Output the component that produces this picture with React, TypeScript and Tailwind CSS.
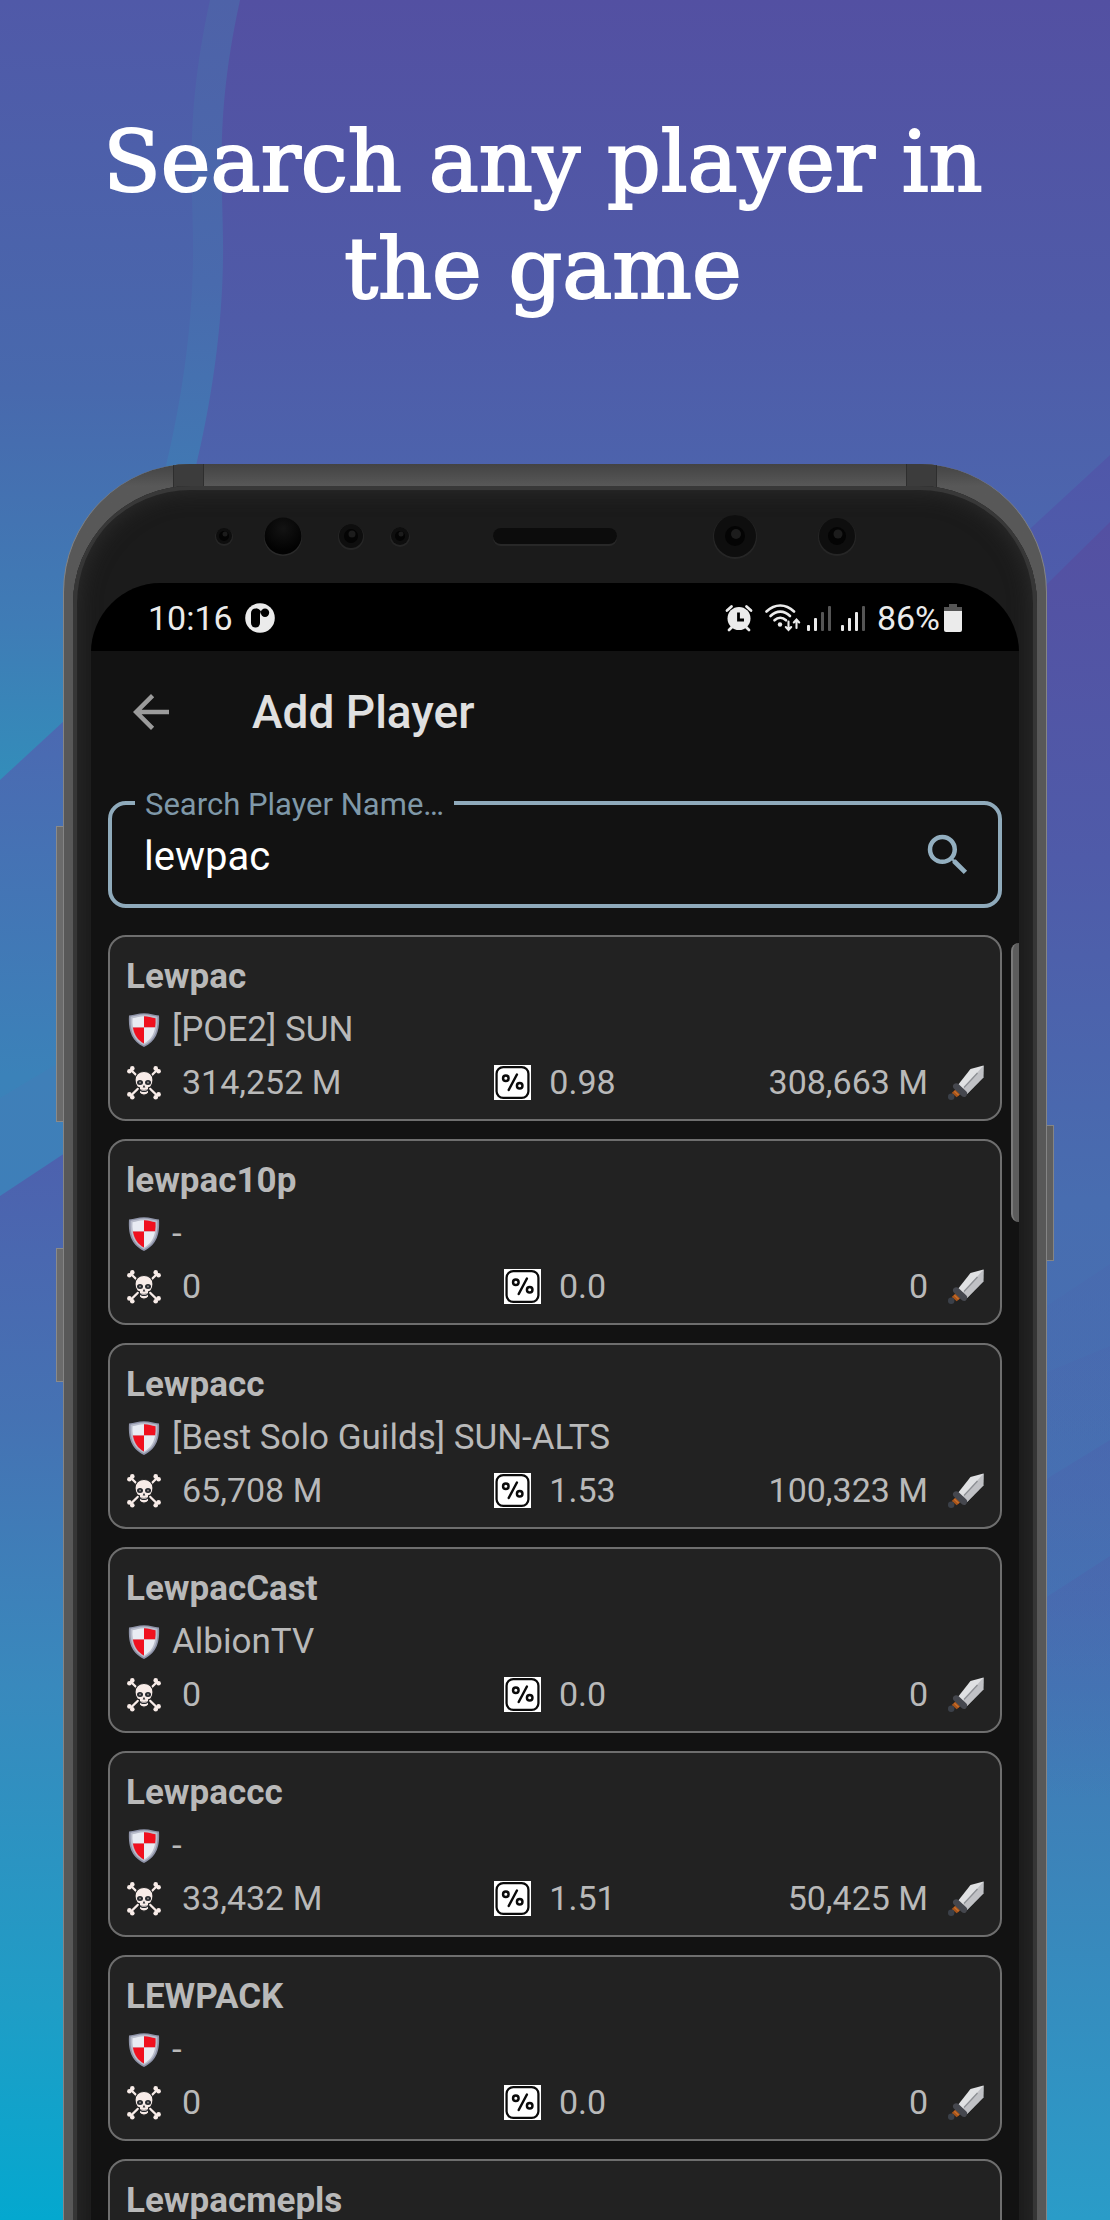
import { useState } from "react";
import { MdArrowBack, MdSearch } from "react-icons/md";

interface Player {
  name: string;
  guild: string;
  deathFame: string;
  ratio: string;
  killFame: string;
}

const PLAYERS: Player[] = [
  { name: "Lewpac", guild: "[POE2] SUN", deathFame: "314,252 M", ratio: "0.98", killFame: "308,663 M" },
  { name: "lewpac10p", guild: "-", deathFame: "0", ratio: "0.0", killFame: "0" },
  { name: "Lewpacc", guild: "[Best Solo Guilds] SUN-ALTS", deathFame: "65,708 M", ratio: "1.53", killFame: "100,323 M" },
  { name: "LewpacCast", guild: "AlbionTV", deathFame: "0", ratio: "0.0", killFame: "0" },
  { name: "Lewpaccc", guild: "-", deathFame: "33,432 M", ratio: "1.51", killFame: "50,425 M" },
  { name: "LEWPACK", guild: "-", deathFame: "0", ratio: "0.0", killFame: "0" },
  { name: "Lewpacmepls", guild: "-", deathFame: "0", ratio: "0.0", killFame: "0" },
];

function ShieldIcon() {
  return (
    <svg viewBox="0 0 36 36" className="size-9 shrink-0" aria-hidden="true">
      <path d="M3 3.5C8 2.8 12 1.4 18 1.2c6 .2 10 1.600 15 2.300.8 13.500-1.500 25-15 31.500C4.500 28.500 2.200 17 3 3.500Z" fill="#8e93a8" />
      <path d="M4.600 4.800C9.500 4 13 2.800 18 2.600c5 .2 8.500 1.400 13.400 2.200.6 12-1.600 22.600-13.400 28.500C6.200 27.400 4 16.800 4.600 4.800Z" fill="#b9bdcb" />
      <path d="M18 4.300c-4.500.2-7.500 1.300-11.500 1.900-.2 3-.1 6 .4 9.300H18Z" fill="#e9ecf3" />
      <path d="M18 4.300c4.500.2 7.500 1.300 11.500 1.900.2 3 .1 6-.4 9.300H18Z" fill="#f0101f" />
      <path d="M6.900 15.500C8.400 23 11.500 28 18 31.600V15.500Z" fill="#f0101f" />
      <path d="M29.100 15.500C27.600 23 24.500 28 18 31.600V15.500Z" fill="#e9ecf3" />
    </svg>
  );
}

function SkullIcon() {
  return (
    <svg viewBox="0 0 36 36" className="size-9 shrink-0" aria-hidden="true">
      <path d="M5 5l26 25.500M31 5 5 30.500" stroke="#f8ece8" strokeWidth="2.400" strokeLinecap="round" />
      <g fill="#f8ece8">
        <circle cx="6.300" cy="3.400" r="2.300" />
        <circle cx="3.400" cy="6.300" r="2.300" />
        <circle cx="29.700" cy="3.400" r="2.300" />
        <circle cx="32.600" cy="6.300" r="2.300" />
        <circle cx="6.300" cy="32.200" r="2.300" />
        <circle cx="3.400" cy="29.400" r="2.300" />
        <circle cx="29.700" cy="32.200" r="2.300" />
        <circle cx="32.600" cy="29.400" r="2.300" />
      </g>
      <path
        d="M18 6.500c-5.500 0-9 3.500-9 8.500 0 2.500.6 4 1.400 5.300.3 1.400 1.500 2.100 3 2.500v5c1.200 1.700 2.700 2.400 4.600 2.400s3.400-.7 4.600-2.400v-5c1.500-.4 2.700-1.100 3-2.500.8-1.300 1.400-2.800 1.400-5.300 0-5-3.500-8.500-9-8.500Z"
        fill="#f8ece8"
        stroke="#222"
        strokeWidth="1.200"
      />
      <ellipse cx="14" cy="17.500" rx="3" ry="2.500" fill="#26292e" />
      <ellipse cx="22" cy="17.500" rx="3" ry="2.500" fill="#26292e" />
      <circle cx="14" cy="17.500" r="1" fill="#8a8583" />
      <circle cx="22" cy="17.500" r="1" fill="#8a8583" />
      <path d="m18 19.800-1.300 2.600h2.600Z" fill="#26292e" />
      <path d="M13.500 23.500c.8 1.200 2.300 1.400 4.500 1.400s3.700-.2 4.500-1.400c0 2-.9 3.600-4.500 3.600s-4.500-1.600-4.500-3.600Z" fill="#26292e" />
      <path d="M15.500 24.700h5v1h-5z" fill="#d8cdca" />
    </svg>
  );
}

function RatioIcon() {
  return (
    <svg viewBox="0 0 36 34" className="h-[35px] w-[37px] shrink-0" aria-hidden="true">
      <path d="M0 0h36v34H0z" fill="#fff" />
      <rect x="2.500" y="2" width="31" height="30" rx="6.500" fill="#fff" stroke="#0a0a0a" strokeWidth="2.200" />
      <g fill="none" stroke="#0a0a0a" strokeWidth="2.400" strokeLinecap="round">
        <circle cx="11.500" cy="12.800" r="2.700" />
        <circle cx="25" cy="20.200" r="2.700" />
        <path d="M22.300 9.200 14.300 24.300" />
      </g>
    </svg>
  );
}

function SwordIcon() {
  return (
    <svg viewBox="0 0 36 36" className="size-9 shrink-0" aria-hidden="true">
      <path d="m9.500 20.500 13-16.500L35.500 .5 35.300 12.500 19 29Z" fill="#e0e1e3" />
      <path d="M35.500 .5 14.200 24.500 19 29 35.300 12.500Z" fill="#c0c1c5" />
      <path d="M29.500 8 16 22.500" stroke="#8d8f94" strokeWidth="1.300" />
      <path d="m3.700 28 5.300-5 5 4.800-5.300 4.500Z" fill="#a6531a" />
      <path d="m6.300 26.300 4.300 4" stroke="#c9702c" strokeWidth="1.200" />
      <path d="M5.500 19.500c1.500-1.500 3.700-1.700 5.200-.3l7.700 7.300c1.500 1.500.9 3.700-.6 4.900-1.300 1-3 .7-4.100-.5L5.800 23.500c-1.100-1-1.300-2.800-.3-4Z" fill="#45474e" />
      <circle cx="3.200" cy="31.800" r="3.200" fill="#3b4049" />
    </svg>
  );
}

function AlarmIcon() {
  return (
    <svg viewBox="0 0 28 28" className="size-7 shrink-0" aria-hidden="true">
      <path d="m2 6.500 4.500-4M26 6.500l-4.500-4" stroke="#ebebeb" strokeWidth="2.800" strokeLinecap="round" />
      <path d="m7 23-3 3M21 23l3 3" stroke="#ebebeb" strokeWidth="2.800" strokeLinecap="round" />
      <circle cx="14" cy="14.500" r="11.500" fill="#ebebeb" />
      <path d="M13.500 8.500v7.500H19" fill="none" stroke="#000" strokeWidth="2.800" />
    </svg>
  );
}

function WifiIcon() {
  return (
    <svg viewBox="0 0 36 28" className="h-7 w-9 shrink-0" aria-hidden="true">
      <g fill="none" stroke="#ebebeb" strokeWidth="2.600" strokeLinecap="round">
        <path d="M1.500 7.500c8.500-8 19-8 27.500 0" />
        <path d="M5.500 12c6-5.800 13.500-5.800 19.500 0" />
        <path d="M9.500 16.300c3.500-3.300 8-3.300 11.500 0" />
        <path d="M23.500 17.500v8M20.800 23l2.700 3 2.700-3M31.500 24v-8M28.800 18.500l2.700-3 2.700 3" strokeWidth="2.100" />
      </g>
      <circle cx="15" cy="20.500" r="2.200" fill="#ebebeb" />
    </svg>
  );
}

function SignalIcon({ level }: { level: number }) {
  const bars = [
    { x: 0, y: 20, h: 6 },
    { x: 7, y: 13, h: 13 },
    { x: 14, y: 7, h: 19 },
    { x: 21, y: 1, h: 25 },
  ];

  return (
    <svg viewBox="0 0 24 26" className="h-[26px] w-6 shrink-0" aria-hidden="true">
      {bars.map((bar, i) => (
        <rect key={bar.x} x={bar.x} y={bar.y} width="3" height={bar.h} rx="1" fill={i < level ? "#ebebeb" : "#555"} />
      ))}
    </svg>
  );
}

function StatusBar() {
  return (
    <div className="flex h-[68px] shrink-0 items-center justify-between bg-black px-[57px] pt-0.5 text-[34px] text-[#ebebeb]">
      <div className="flex items-center gap-3">
        <span>10:16</span>
        <svg viewBox="0 0 30 30" className="size-[30px]" aria-hidden="true">
          <circle cx="15" cy="15" r="14.800" fill="#ebebeb" />
          <rect x="6" y="5.500" width="9" height="19" rx="4.500" fill="#000" />
          <path d="M11 5.500c3 0 4 1.500 5 3l-1 3h-3Z" fill="#000" />
          <circle cx="20" cy="9.700" r="4.200" fill="#000" />
        </svg>
      </div>
      <div className="flex items-center">
        <AlarmIcon />
        <span className="ml-3">
          <WifiIcon />
        </span>
        <span className="ml-1.5 flex gap-2.5">
          <SignalIcon level={2} />
          <SignalIcon level={3} />
        </span>
        <span className="ml-3">86%</span>
        <svg viewBox="0 0 18 28" className="ml-1 h-7 w-[18px]" aria-hidden="true">
          <path d="M5 0h8v3h5v5H0V3h5Z" fill="#555" />
          <path d="M0 7h18v19a2 2 0 0 1-2 2H2a2 2 0 0 1-2-2Z" fill="#ebebeb" />
        </svg>
      </div>
    </div>
  );
}

function PlayerCard({ player }: { player: Player }) {
  return (
    <li className="rounded-[18px] border-2 border-[#6e6e6e] bg-[#222222] px-4 pt-[13px] pb-2.5 text-[34px] leading-[53px] text-[#b9b9b9]">
      <h2 className="text-[35px] font-bold">{player.name}</h2>
      <div className="flex items-center gap-2.5 text-[35px]">
        <ShieldIcon />
        <span>{player.guild}</span>
      </div>
      <div className="grid grid-cols-3">
        <div className="flex items-center gap-5">
          <SkullIcon />
          <span>{player.deathFame}</span>
        </div>
        <div className="flex items-center justify-center gap-[18px]">
          <RatioIcon />
          <span>{player.ratio}</span>
        </div>
        <div className="flex items-center justify-end gap-5">
          <span>{player.killFame}</span>
          <SwordIcon />
        </div>
      </div>
    </li>
  );
}

function Lens({ cx, r, pupil }: { cx: number; r: number; pupil: number }) {
  return (
    <g>
      <circle cx={cx} cy="51" r={r + 1} fill="#262626" />
      <circle cx={cx} cy="50" r={r} fill="#0e0e0e" />
      <circle cx={cx} cy="50" r={pupil} fill="#040404" />
      <circle cx={cx + 1} cy="48" r={pupil / 2} fill="#1c1c1c" />
    </g>
  );
}

function Sensors() {
  return (
    <svg viewBox="0 0 944 97" className="block w-full" aria-hidden="true">
      <defs>
        <radialGradient id="lens" cx="0.5" cy="0.3" r="0.6">
          <stop offset="0" stopColor="#131313" />
          <stop offset="1" stopColor="#020202" />
        </radialGradient>
      </defs>
      <Lens cx={141} r={8} pupil={5} />
      <circle cx="200" cy="51" r="19" fill="#2a2a2a" />
      <circle cx="200" cy="50" r="18.500" fill="url(#lens)" />
      <Lens cx={268} r={12} pupil={7} />
      <Lens cx={317} r={9} pupil={5} />
      <rect x="410" y="43" width="124" height="17" rx="8" fill="#282828" />
      <rect x="410" y="42" width="124" height="16" rx="8" fill="#0c0c0c" />
      <Lens cx={652} r={21} pupil={10} />
      <Lens cx={754} r={18} pupil={9} />
    </svg>
  );
}

function Backdrop() {
  return (
    <svg
      viewBox="0 0 1110 2220"
      preserveAspectRatio="none"
      className="absolute inset-0 -z-10 size-full"
      aria-hidden="true"
    >
      <defs>
        <linearGradient id="base" gradientUnits="userSpaceOnUse" x1="0" y1="0" x2="0" y2="640">
          <stop offset="0" stopColor="#5350a2" />
          <stop offset="0.5" stopColor="#4f5ba8" />
          <stop offset="1" stopColor="#4a6cb1" />
        </linearGradient>
        <linearGradient id="disc" gradientUnits="userSpaceOnUse" x1="0" y1="0" x2="0" y2="780">
          <stop offset="0" stopColor="#5059a8" />
          <stop offset="0.5" stopColor="#4869ad" />
          <stop offset="0.8" stopColor="#3f7cb6" />
          <stop offset="1" stopColor="#338dba" />
        </linearGradient>
        <linearGradient id="ring" gradientUnits="userSpaceOnUse" x1="0" y1="0" x2="0" y2="470">
          <stop offset="0" stopColor="#4e62a8" />
          <stop offset="0.6" stopColor="#496aad" />
          <stop offset="1" stopColor="#4178b3" />
        </linearGradient>
        <linearGradient id="leftMid" gradientUnits="userSpaceOnUse" x1="0" y1="712" x2="0" y2="1195">
          <stop offset="0" stopColor="#4c68b1" />
          <stop offset="0.75" stopColor="#3b82b9" />
          <stop offset="1" stopColor="#3a82ba" />
        </linearGradient>
        <linearGradient id="leftLow" gradientUnits="userSpaceOnUse" x1="0" y1="1150" x2="0" y2="2220">
          <stop offset="0" stopColor="#4d61ae" />
          <stop offset="0.25" stopColor="#4572b3" />
          <stop offset="0.5" stopColor="#3989bd" />
          <stop offset="0.8" stopColor="#1f9dc6" />
          <stop offset="1" stopColor="#04a8cf" />
        </linearGradient>
        <linearGradient id="rightTop" gradientUnits="userSpaceOnUse" x1="0" y1="460" x2="0" y2="640">
          <stop offset="0" stopColor="#5057a9" />
          <stop offset="1" stopColor="#4c5fac" />
        </linearGradient>
        <linearGradient id="right" gradientUnits="userSpaceOnUse" x1="0" y1="520" x2="0" y2="2220">
          <stop offset="0" stopColor="#5450a2" />
          <stop offset="0.2" stopColor="#4f5ba9" />
          <stop offset="0.4" stopColor="#486db0" />
          <stop offset="0.64" stopColor="#4572b3" />
          <stop offset="0.8" stopColor="#3b85ba" />
          <stop offset="1" stopColor="#2a9cc8" />
        </linearGradient>
        <linearGradient id="facet" x1="0" y1="0" x2="0" y2="1">
          <stop offset="0" stopColor="#4c62ac" stopOpacity="0.6" />
          <stop offset="1" stopColor="#4c62ac" stopOpacity="0" />
        </linearGradient>
      </defs>
      <path d="M0 0h1110v2220H0z" fill="url(#base)" />
      <path d="M0 0h240C216 110 222 170 223 240c1 80-11 160-28 230l-35 170H0Z" fill="url(#ring)" />
      <path d="M0 0h210C186 110 192 170 193 240c1 80-11 160-28 230L130 780H0Z" fill="url(#disc)" />
      <path d="M0 780 130 660V1220H0Z" fill="url(#leftMid)" />
      <path d="M0 1098 130 1020V1220H0Z" fill="#487bb5" fillOpacity="0.3" />
      <path d="M0 1196 130 1110V2220H0Z" fill="url(#leftLow)" />
      <path d="M1110 455 980 575V900h130Z" fill="url(#rightTop)" />
      <path d="M1110 522 980 650V2220h130Z" fill="url(#right)" />
      <path d="M1110 1264 980 1350V1440h130Z" fill="url(#facet)" fillOpacity="0.4" />
      <path d="M1110 1346 980 1400V1520h130Z" fill="url(#facet)" fillOpacity="0.4" />
      <path d="M1110 1440 980 1520V1620h130Z" fill="url(#facet)" fillOpacity="0.8" />
      <path d="M1110 1556 980 1640V1800h130Z" fill="url(#facet)" fillOpacity="0.8" />
    </svg>
  );
}

export default function App() {
  const [query, setQuery] = useState("lewpac");

  return (
    <main className="relative isolate flex h-screen flex-col overflow-hidden font-[Roboto,sans-serif]">
      <Backdrop />

      <h1 className="pt-[109px] pr-16 pb-[141px] pl-10 text-center font-['DejaVu_Serif',serif] text-[84px] leading-[107px] text-white [-webkit-text-stroke:2px_white]">
        Search any player in
        <br />
        the game
      </h1>

      <div className="relative mx-[63px] flex min-h-0 flex-1 flex-col">
        {/* side keys */}
        <div className="absolute top-[362px] -left-[7px] h-[296px] w-2.5 border border-[#8a8a8a] bg-[#6b6b6b]" />
        <div className="absolute top-[784px] -left-[7px] h-[134px] w-2.5 border border-[#8a8a8a] bg-[#6b6b6b]" />
        <div className="absolute top-[661px] -right-[7px] h-[136px] w-2.5 border border-[#858585] bg-[#5f5f5f]" />

        <div className="relative flex min-h-0 flex-1 flex-col overflow-hidden rounded-t-[128px] border-x border-[#858585] bg-linear-to-b from-[#434343] to-[#585858] to-[22px] px-[9px] pt-[22px]">
          <div className="absolute top-0 left-[109px] h-8 w-[31px] border-x border-[#2e2e2e] bg-[#3c3c3c]" />
          <div className="absolute top-0 right-[109px] h-8 w-[31px] border-x border-[#2e2e2e] bg-[#3c3c3c]" />

          {/* the glass runs on below the fold, so its lower edge glow stays out of view */}
          <div className="relative -mb-8 flex min-h-0 flex-1 flex-col rounded-t-[118px] bg-[#1b1b1b] px-[18px] shadow-[inset_0_4px_0_#383838,inset_4px_0_0_#363636,inset_-4px_0_0_#363636,inset_0_0_22px_4px_#2e2e2e]">
            <div className="-mx-2 h-[97px] shrink-0">
              <Sensors />
            </div>

            <div className="relative flex min-h-0 flex-1 flex-col overflow-hidden rounded-t-[70px] bg-[#121212]">
              <StatusBar />

              <header className="flex h-[122px] shrink-0 items-center gap-[74px] pl-[33px]">
                <button type="button" aria-label="Back" className="text-[#9b9b9b]">
                  <MdArrowBack className="size-[54px]" />
                </button>
                <p className="text-[46px] font-medium text-[#e0e0e0]">Add Player</p>
              </header>

              <div className="mt-7 shrink-0 px-[17px]">
                <div className="relative flex h-[107px] items-center rounded-[18px] border-4 border-[#8faabb] pr-[23px] pl-8">
                  <label
                    htmlFor="player-name"
                    className="absolute -top-[18px] left-[23px] bg-[#121212] px-2.5 text-[31px] leading-9 text-[#7f98a8]"
                  >
                    Search Player Name…
                  </label>
                  <input
                    id="player-name"
                    type="text"
                    value={query}
                    onChange={(e) => setQuery(e.target.value)}
                    className="min-w-0 flex-1 bg-transparent pt-1 text-[40px] text-white outline-none"
                  />
                  <button type="button" aria-label="Search" className="text-[#93afc0]">
                    <MdSearch className="size-[54px]" />
                  </button>
                </div>
              </div>

              <ul className="mt-[27px] flex flex-col gap-[18px] px-[17px]">
                {PLAYERS.map((player) => (
                  <PlayerCard key={player.name} player={player} />
                ))}
              </ul>

              {/* scroll thumb */}
              <div className="absolute top-[360px] right-0 h-[279px] w-2 rounded-l-lg border-l-2 border-[#7a7a7a] bg-[#5c5c5c]" />
            </div>
          </div>
        </div>
      </div>
    </main>
  );
}
